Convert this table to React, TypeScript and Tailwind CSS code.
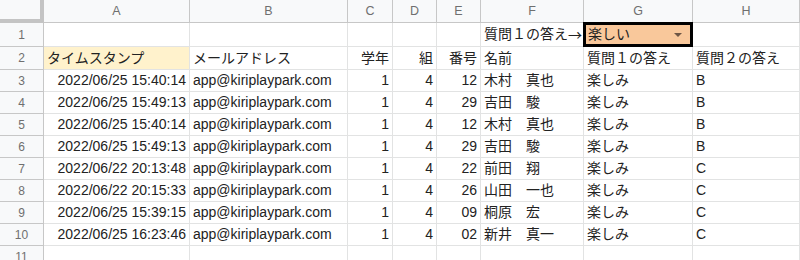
import React from 'react';

const COLS = ['A', 'B', 'C', 'D', 'E', 'F', 'G', 'H'];

type Row = [string, string, string, string, string, string, string, string];

const ROWS: Row[] = [
  ['2022/06/25 15:40:14', 'app@kiriplaypark.com', '1', '4', '12', '木村　真也', '楽しみ', 'B'],
  ['2022/06/25 15:49:13', 'app@kiriplaypark.com', '1', '4', '29', '吉田　駿', '楽しみ', 'B'],
  ['2022/06/25 15:40:14', 'app@kiriplaypark.com', '1', '4', '12', '木村　真也', '楽しみ', 'B'],
  ['2022/06/25 15:49:13', 'app@kiriplaypark.com', '1', '4', '29', '吉田　駿', '楽しみ', 'B'],
  ['2022/06/22 20:13:48', 'app@kiriplaypark.com', '1', '4', '22', '前田　翔', '楽しみ', 'C'],
  ['2022/06/22 20:15:33', 'app@kiriplaypark.com', '1', '4', '26', '山田　一也', '楽しみ', 'C'],
  ['2022/06/25 15:39:15', 'app@kiriplaypark.com', '1', '4', '09', '桐原　宏', '楽しみ', 'C'],
  ['2022/06/25 16:23:46', 'app@kiriplaypark.com', '1', '4', '02', '新井　真一', '楽しみ', 'C'],
];

// columns A, C, D, E hold right-aligned values in the data rows
const RIGHT = [true, false, true, true, true, false, false, false];

const cell = 'flex items-center px-[3px] border-r border-b border-[#e2e3e3] overflow-hidden whitespace-nowrap';
const rowHead =
  'flex items-center justify-center bg-[#f8f9fa] border-r border-b border-[#c7c7c7] text-[12px] text-[#6f6f6f]';

export default function App() {
  return (
    <div
      className="w-[800px] h-[260px] overflow-hidden bg-white text-[14px] text-[#222]"
      style={{ fontFamily: '"Liberation Sans", "Noto Sans CJK JP", sans-serif' }}
    >
      <div className="grid grid-cols-[44px_146px_158px_45px_44px_44px_103px_109px_107px] grid-rows-[23px_24px_23px_repeat(8,22px)_22px]">
        {/* header row */}
        <div className="bg-[#f8f9fa] border-r-4 border-b-4 border-[#c4c4c4]" />
        {COLS.map((c) => (
          <div
            key={c}
            className="flex items-center justify-center bg-[#f8f9fa] border-r border-b border-[#c7c7c7] text-[12.5px] text-[#6f6f6f]"
          >
            {c}
          </div>
        ))}

        {/* row 1 */}
        <div className={rowHead}>1</div>
        <div className={cell} />
        <div className={cell} />
        <div className={cell} />
        <div className={cell} />
        <div className={cell} />
        <div className={cell}>
          質問１の答え<span className="font-['Noto_Sans_CJK_JP',sans-serif]">→</span>
        </div>
        <div className="flex items-center justify-between pl-[2px] pr-[8px] bg-[#f9c89b] border-[3px] border-black -ml-px -mt-px whitespace-nowrap">
          <span>楽しい</span>
          <span className="w-0 h-0 border-l-[4px] border-r-[4px] border-t-[4px] border-l-transparent border-r-transparent border-t-[#6e5645]" />
        </div>
        <div className={cell} />

        {/* row 2 */}
        <div className={rowHead}>2</div>
        <div className={`${cell} bg-[#fff2cc]`}>タイムスタンプ</div>
        <div className={cell}>メールアドレス</div>
        <div className={`${cell} justify-end`}>学年</div>
        <div className={`${cell} justify-end`}>組</div>
        <div className={`${cell} justify-end`}>番号</div>
        <div className={cell}>名前</div>
        <div className={cell}>質問１の答え</div>
        <div className={cell}>質問２の答え</div>

        {/* data rows */}
        {ROWS.map((r, i) => (
          <React.Fragment key={i}>
            <div className={i === 2 ? `${rowHead} bg-[#e8eaed]` : rowHead}>{i + 3}</div>
            {r.map((v, j) => (
              <div key={j} className={RIGHT[j] ? `${cell} justify-end` : cell}>
                {v}
              </div>
            ))}
          </React.Fragment>
        ))}

        {/* row 11 */}
        <div className={`${rowHead} items-start pt-[2px]`}>11</div>
        {COLS.map((c) => (
          <div key={c} className={cell} />
        ))}
      </div>
    </div>
  );
}
